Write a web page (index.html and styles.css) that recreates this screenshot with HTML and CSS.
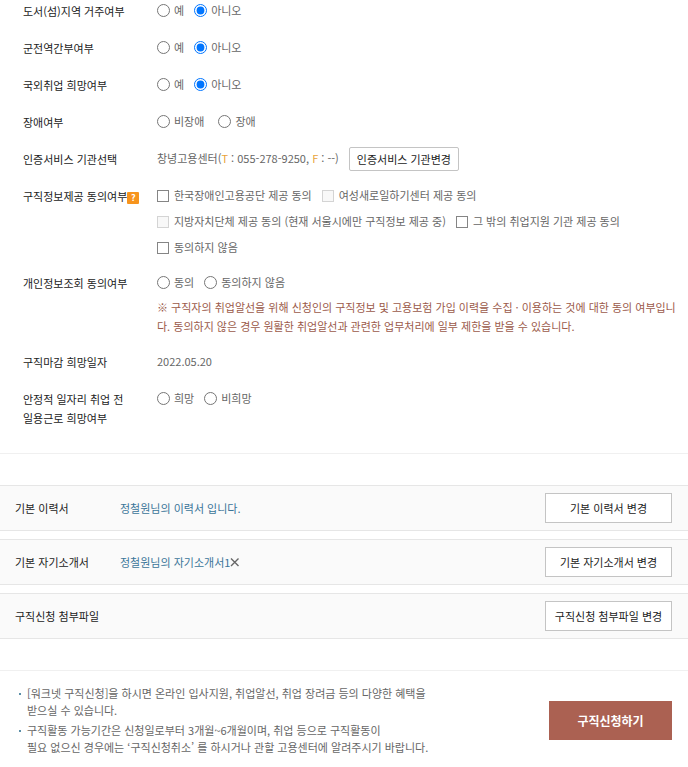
FILE: index.html
```html
<!DOCTYPE html>
<html lang="ko">
<head>
<meta charset="utf-8">
<meta name="viewport" content="width=device-width, initial-scale=1">
<title>구직신청</title>
<link rel="stylesheet" href="styles.css">
</head>
<body>
<form>
  <div class="fields">
    <div class="row" role="radiogroup" aria-labelledby="l-island">
      <div class="name" id="l-island">도서(섬)지역 거주여부</div>
      <div class="options">
        <label class="option"><input type="radio" name="island">예</label>
        <label class="option"><input type="radio" name="island" checked>아니오</label>
      </div>
    </div>
    <div class="row" role="radiogroup" aria-labelledby="l-officer">
      <div class="name" id="l-officer">군전역간부여부</div>
      <div class="options">
        <label class="option"><input type="radio" name="officer">예</label>
        <label class="option"><input type="radio" name="officer" checked>아니오</label>
      </div>
    </div>
    <div class="row" role="radiogroup" aria-labelledby="l-abroad">
      <div class="name" id="l-abroad">국외취업 희망여부</div>
      <div class="options">
        <label class="option"><input type="radio" name="abroad">예</label>
        <label class="option"><input type="radio" name="abroad" checked>아니오</label>
      </div>
    </div>
    <div class="row" role="radiogroup" aria-labelledby="l-disability">
      <div class="name" id="l-disability">장애여부</div>
      <div class="options wide">
        <label class="option"><input type="radio" name="disability">비장애</label>
        <label class="option"><input type="radio" name="disability">장애</label>
      </div>
    </div>
    <div class="row">
      <div class="name">인증서비스 기관선택</div>
      <div class="options">
        <span>창녕고용센터(<span class="mark">T</span> : 055-278-9250, <span class="mark">F</span> : --)</span>
        <button type="button" class="btn-small">인증서비스 기관변경</button>
      </div>
    </div>
    <div class="row" role="group" aria-labelledby="l-share">
      <div class="name"><span id="l-share">구직정보제공 동의여부</span><button type="button" class="help">?</button></div>
      <div class="options">
        <label class="option"><input type="checkbox">한국장애인고용공단 제공 동의</label>
        <label class="option"><input type="checkbox" disabled>여성새로일하기센터 제공 동의</label>
        <label class="option"><input type="checkbox" disabled>지방자치단체 제공 동의 (현재 서울시에만 구직정보 제공 중)</label>
        <label class="option"><input type="checkbox">그 밖의 취업지원 기관 제공 동의</label>
        <label class="option"><input type="checkbox">동의하지 않음</label>
      </div>
    </div>
    <div class="row" role="radiogroup" aria-labelledby="l-privacy">
      <div class="name" id="l-privacy">개인정보조회 동의여부</div>
      <div>
        <div class="options">
          <label class="option"><input type="radio" name="privacy">동의</label>
          <label class="option"><input type="radio" name="privacy">동의하지 않음</label>
        </div>
        <p class="note">※ 구직자의 취업알선을 위해 신청인의 구직정보 및 고용보험 가입 이력을 수집 · 이용하는 것에 대한 동의 여부입니다. 동의하지 않은 경우 원활한 취업알선과 관련한 업무처리에 일부 제한을 받을 수 있습니다.</p>
      </div>
    </div>
    <div class="row">
      <div class="name">구직마감 희망일자</div>
      <div>2022.05.20</div>
    </div>
    <div class="row" role="radiogroup" aria-labelledby="l-daily">
      <div class="name" id="l-daily">안정적 일자리 취업 전<br>일용근로 희망여부</div>
      <div class="options">
        <label class="option"><input type="radio" name="daily">희망</label>
        <label class="option"><input type="radio" name="daily">비희망</label>
      </div>
    </div>
  </div>

  <div class="documents">
    <div class="doc">
      <span class="doc-name">기본 이력서</span>
      <a class="doc-link" href="#">정철원님의 이력서 입니다.</a>
      <button type="button" class="btn-doc">기본 이력서 변경</button>
    </div>
    <div class="doc">
      <span class="doc-name">기본 자기소개서</span>
      <a class="doc-link" href="#">정철원님의 자기소개서1</a>
      <button type="button" class="remove" aria-label="삭제"><svg viewBox="0 0 10 10" width="10" height="10"><path d="M1 1.5 8.5 9M8.5 1.5 1 9" fill="none" stroke="#666" stroke-width="1.4"/></svg></button>
      <button type="button" class="btn-doc">기본 자기소개서 변경</button>
    </div>
    <div class="doc">
      <span class="doc-name">구직신청 첨부파일</span>
      <button type="button" class="btn-doc">구직신청 첨부파일 변경</button>
    </div>
  </div>

  <div class="footer">
    <ul class="tips">
      <li>[워크넷 구직신청]을 하시면 온라인 입사지원, 취업알선, 취업 장려금 등의 다양한 혜택을<br>받으실 수 있습니다.</li>
      <li>구직활동 가능기간은 신청일로부터 3개월~6개월이며, 취업 등으로 구직활동이<br>필요 없으신 경우에는 ‘구직신청취소’ 를 하시거나 관할 고용센터에 알려주시기 바랍니다.</li>
    </ul>
    <button type="submit" class="submit">구직신청하기</button>
  </div>
</form>
</body>
</html>
```
FILE: styles.css
```css
* {
  box-sizing: border-box;
}

body {
  margin: 0;
  background: #fff;
  color: #666;
  font: 11px/19px "Noto Sans CJK KR", "Noto Sans", sans-serif;
}

button {
  padding: 0;
  font: inherit;
  color: #222;
  background: #fff;
  border: 1px solid #c4c4c4;
  cursor: pointer;
}

.fields {
  display: flex;
  flex-direction: column;
  gap: 16px;
  padding: 1px 10px 25px 23px;
  border-bottom: 1px solid #f0f0f0;
}

.row {
  display: grid;
  grid-template-columns: 134px 1fr;
  min-height: 21px;
}

.name {
  padding-top: 1px;
  color: #222;
}

.options {
  display: flex;
  flex-wrap: wrap;
  align-items: center;
  align-content: flex-start;
  gap: 7px 10px;
}

.options.wide {
  column-gap: 14px;
}

.option {
  display: flex;
  align-items: center;
  gap: 4px;
}

.option input {
  width: 13px;
  height: 13px;
  margin: 0;
}

.option input[type="checkbox"] {
  width: 12px;
  height: 12px;
  margin-right: 1px;
  appearance: none;
  background: #fff;
  border: 1px solid #858585;
}

.option input[type="checkbox"]:checked {
  background: #0075ff;
  border-color: #0075ff;
}

.option input[type="checkbox"]:disabled {
  background: #f8f8f8;
  border-color: #d4d4d4;
}

.mark {
  color: #e8a33a;
}

.btn-small {
  height: 24px;
  margin: -3px 0;
  padding: 0 7px;
  line-height: 20px;
  border-radius: 2px;
}

.help {
  width: 12px;
  height: 12px;
  border: 0;
  border-radius: 1px;
  background: #f7941d;
  color: #fff;
  font-size: 9px;
  font-weight: bold;
  line-height: 12px;
  vertical-align: 0;
}

.note {
  margin: 6px 0 0;
  color: #9b5a4a;
}

.documents {
  display: flex;
  flex-direction: column;
  gap: 8px;
  padding: 31px 0 31px;
}

.doc {
  display: flex;
  align-items: center;
  padding: 7px 16px 7px 15px;
  background: #fafafa;
  border: solid #e6e6e6;
  border-width: 1px 0;
}

.doc-name {
  width: 105px;
  color: #222;
}

.doc-link {
  color: #3a7599;
  text-decoration: none;
}

.remove {
  display: flex;
  border: 0;
  background: none;
}

.btn-doc {
  width: 127px;
  height: 30px;
  margin-left: auto;
}

.footer {
  display: flex;
  align-items: center;
  justify-content: space-between;
  padding: 14px 16px 10px 19px;
  border-top: 1px solid #f0f0f0;
}

.tips {
  display: flex;
  flex-direction: column;
  gap: 3px;
  margin: 0;
  padding: 0;
  list-style: none;
  line-height: 17px;
}

.tips li {
  padding-left: 8px;
  background: linear-gradient(#5b8fa8, #5b8fa8) 0 8px / 2px 2px no-repeat;
}

.submit {
  width: 123px;
  height: 39px;
  border: 0;
  background: #ab6152;
  color: #fff;
  font-size: 12px;
  font-weight: bold;
}
```
